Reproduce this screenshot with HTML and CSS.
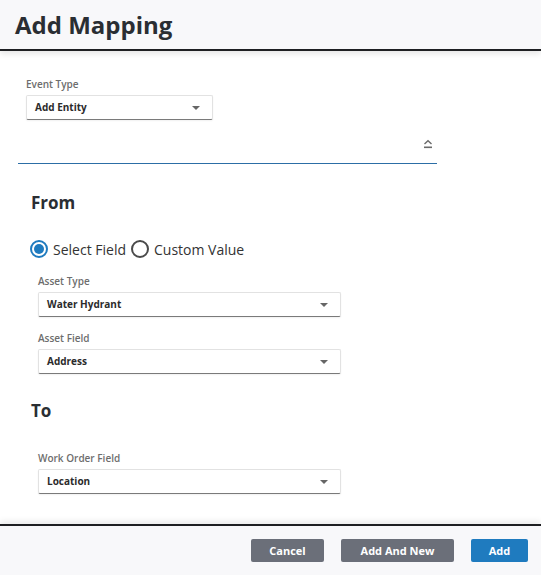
FILE: index.html
```
<!DOCTYPE html>
<html>
<head>
<meta charset="utf-8">
<link rel="stylesheet" href="styles.css">
</head>
<body>
<div class="page">
  <header class="header">
    <h1 class="title">Add Mapping</h1>
  </header>
  <main class="content">
    <div class="event-group">
      <div class="label">Event Type</div>
      <div class="select select-event"><span class="select-text">Add Entity</span><span class="caret"></span></div>
    </div>
    <div class="toggle-row">
      <svg class="chev" width="12" height="10" viewBox="0 0 12 10"><path d="M2.5 5 L6 1.8 L9.5 5" fill="none" stroke="#6a6a6a" stroke-width="1.4"/><line x1="2" y1="8.3" x2="10" y2="8.3" stroke="#6a6a6a" stroke-width="1.6"/></svg>
    </div>
    <h2 class="section-title from-title">From</h2>
    <div class="radio-row">
      <label class="radio"><span class="radio-dot checked"></span>Select Field</label>
      <label class="radio"><span class="radio-dot"></span>Custom Value</label>
    </div>
    <div class="field field-first">
      <div class="label">Asset Type</div>
      <div class="select"><span class="select-text">Water Hydrant</span><span class="caret"></span></div>
    </div>
    <div class="field field-second">
      <div class="label">Asset Field</div>
      <div class="select"><span class="select-text">Address</span><span class="caret"></span></div>
    </div>
    <h2 class="section-title to-title">To</h2>
    <div class="field field-to">
      <div class="label">Work Order Field</div>
      <div class="select"><span class="select-text">Location</span><span class="caret"></span></div>
    </div>
  </main>
  <footer class="footer">
    <button class="btn btn-gray">Cancel</button>
    <button class="btn btn-gray btn-wide">Add And New</button>
    <button class="btn btn-blue">Add</button>
  </footer>
</div>
</body>
</html>
```
FILE: styles.css
```
* { box-sizing: border-box; }
html, body { margin: 0; padding: 0; }
body {
  font-family: "Open Sans", "Noto Sans", sans-serif;
  background: #ffffff;
  color: #2b2f33;
}
.page {
  width: 541px;
  height: 575px;
  display: flex;
  flex-direction: column;
  overflow: hidden;
}
.header {
  height: 51px;
  background: #f8f8fa;
  border-bottom: 2px solid #1e1f22;
  padding-left: 15px;
  display: flex;
  align-items: center;
  box-shadow: 0 3px 6px rgba(0,0,0,0.10);
  position: relative;
  z-index: 1;
}
.title {
  margin: 0;
  font-size: 24px;
  font-weight: 700;
  color: #2a2e33;
  line-height: 30px;
  padding-top: 1px;
}
.content {
  flex: 1;
  display: flex;
  flex-direction: column;
  align-items: flex-start;
}
.label {
  font-size: 10px;
  font-weight: 600;
  color: #6d6d6d;
  line-height: 14px;
  height: 14px;
}
.event-group {
  margin-top: 26px;
  margin-left: 26px;
}
.select {
  margin-top: 4px;
  width: 303px;
  height: 25px;
  border: 1px solid #e2e2e2;
  border-bottom: 1px solid #7a7a7a;
  border-radius: 2px;
  display: flex;
  align-items: center;
  justify-content: space-between;
  padding: 0 12px 1px 8px;
  box-shadow: 0 1px 2px rgba(0,0,0,0.06);
}
.select-event { width: 187px; }
.select-text {
  font-size: 10px;
  font-weight: 700;
  color: #2b2b2b;
}
.caret {
  width: 0;
  height: 0;
  border-left: 4.5px solid transparent;
  border-right: 4.5px solid transparent;
  border-top: 4.5px solid #666;
  margin-top: 1px;
}
.toggle-row {
  margin-left: 18px;
  width: 419px;
  height: 44px;
  border-bottom: 1.5px solid #2c6ea6;
  display: flex;
  justify-content: flex-end;
  align-items: flex-end;
  padding-right: 3px;
  padding-bottom: 14px;
}
.section-title {
  margin: 0;
  margin-left: 31px;
  font-size: 17px;
  font-weight: 700;
  line-height: 22px;
  color: #2a2e33;
}
.from-title { margin-top: 28px; }
.to-title { margin-top: 26px; }
.radio-row {
  margin-top: 25px;
  margin-left: 30px;
  height: 20px;
  display: flex;
  align-items: center;
  gap: 5px;
}
.radio {
  display: flex;
  align-items: center;
  font-size: 14px;
  color: #333;
  gap: 5px;
}
.radio-dot {
  width: 18px;
  height: 18px;
  border-radius: 50%;
  border: 2px solid #4a4a4a;
  display: flex;
  align-items: center;
  justify-content: center;
}
.radio-dot.checked { border-color: #1f7bbf; }
.radio-dot.checked::after {
  content: "";
  width: 10px;
  height: 10px;
  border-radius: 50%;
  background: #1f7bbf;
}
.field { margin-left: 38px; }
.field-first { margin-top: 15px; }
.field-second { margin-top: 14px; }
.field-to { margin-top: 29px; }
.footer {
  height: 51px;
  background: #f8f8fa;
  border-top: 2px solid #1e1f22;
  box-shadow: 0 -3px 6px rgba(0,0,0,0.08);
  display: flex;
  justify-content: flex-end;
  align-items: flex-start;
  padding: 13px 13px 0 0;
  gap: 17px;
}
.btn {
  height: 23px;
  border: none;
  border-radius: 2px;
  color: #ffffff;
  font-family: "Open Sans", "Noto Sans", sans-serif;
  font-size: 11px;
  font-weight: 700;
  padding: 0;
  cursor: pointer;
}
.btn-gray { background: #6b6f79; width: 73px; }
.btn-wide { width: 113px; }
.btn-blue { background: #1f7bbf; width: 57px; }
```
